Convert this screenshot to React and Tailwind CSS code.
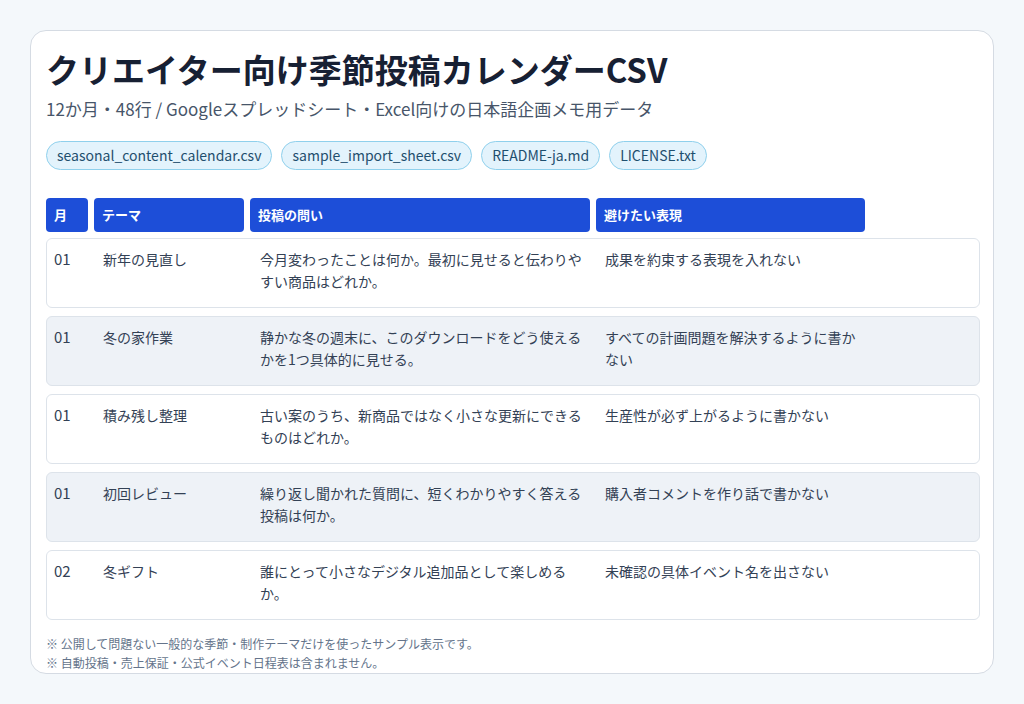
export default function App() {
  const rows = [
    ["01", "新年の見直し", "今月変わったことは何か。最初に見せると伝わりやすい商品はどれか。", "成果を約束する表現を入れない"],
    ["01", "冬の家作業", "静かな冬の週末に、このダウンロードをどう使えるかを1つ具体的に見せる。", "すべての計画問題を解決するように書かない"],
    ["01", "積み残し整理", "古い案のうち、新商品ではなく小さな更新にできるものはどれか。", "生産性が必ず上がるように書かない"],
    ["01", "初回レビュー", "繰り返し聞かれた質問に、短くわかりやすく答える投稿は何か。", "購入者コメントを作り話で書かない"],
    ["02", "冬ギフト", "誰にとって小さなデジタル追加品として楽しめるか。", "未確認の具体イベント名を出さない"],
  ];
  const chips = ["seasonal_content_calendar.csv", "sample_import_sheet.csv", "README-ja.md", "LICENSE.txt"];
  const cols = "grid grid-cols-[42px_150px_340px_269px] gap-[6px]";
  return (
    <div className="w-[1024px] h-[704px] bg-[#f4f8fb] pt-[30px] pl-[30px] overflow-hidden" style={{ fontFamily: '"Noto Sans CJK JP", "Noto Sans", sans-serif' }}>
      <div className="w-[964px] h-[644px] bg-white border border-[#d5dbe3] rounded-[16px] px-[15px] pt-[14px] overflow-hidden">
        <h1 className="text-[33px] font-bold text-[#172033] leading-[48px]">クリエイター向け季節投稿カレンダーCSV</h1>
        <p className="text-[17px] text-[#475569] mt-[3px] leading-[26px]">12か月・48行 / Googleスプレッドシート・Excel向けの日本語企画メモ用データ</p>
        <div className="flex gap-[9px] mt-[19px]">
          {chips.map(c => (
            <span key={c} className="h-[29px] px-[10px] flex items-center rounded-full bg-[#e3f3fc] border border-[#8fd0ec] text-[14px] text-[#1f4f6e]">{c}</span>
          ))}
        </div>
        <div className={cols + " mt-[28px]"}>
          {["月", "テーマ", "投稿の問い", "避けたい表現"].map(h => (
            <div key={h} className="h-[34px] bg-[#1d4ed8] rounded-[4px] text-white text-[13px] font-bold flex items-center px-[8px]">{h}</div>
          ))}
        </div>
        <div className="flex flex-col gap-[8px] mt-[6px] w-[934px]">
          {rows.map((r, i) => (
            <div key={i} className={"h-[70px] border border-[#dde3ea] rounded-[6px] pt-[9px] " + (i % 2 ? "bg-[#eef2f7]" : "bg-white")}>
              <div className={cols + " text-[14px] text-[#334155] leading-[22px]"}>
                <div className="px-[7px] text-[15px]">{r[0]}</div>
                <div className="px-[8px]">{r[1]}</div>
                <div className="px-[9px]">{r[2]}</div>
                <div className="px-[8px]">{r[3]}</div>
              </div>
            </div>
          ))}
        </div>
        <div className="mt-[14px] text-[12px] text-[#64748b] leading-[19px]">
          <p>※ 公開して問題ない一般的な季節・制作テーマだけを使ったサンプル表示です。</p>
          <p>※ 自動投稿・売上保証・公式イベント日程表は含まれません。</p>
        </div>
      </div>
    </div>
  );
}
